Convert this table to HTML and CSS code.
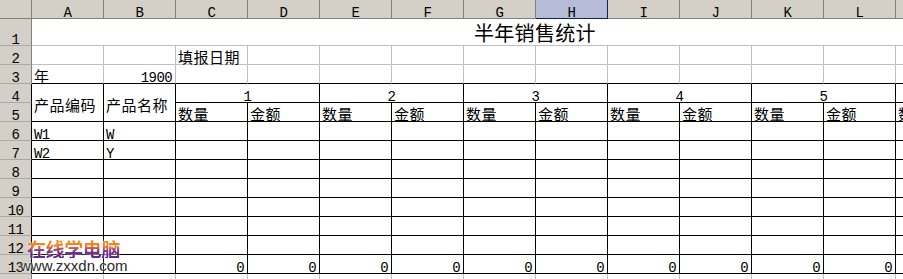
FILE: index.html
```html
<!DOCTYPE html>
<html lang="zh">
<head>
<meta charset="utf-8">
<title>半年销售统计</title>
<link rel="stylesheet" href="styles.css">
</head>
<body>
<div class="sheet">
  <!-- column headers -->
  <div class="c h"></div>
  <div class="c h">A</div><div class="c h">B</div><div class="c h">C</div><div class="c h">D</div>
  <div class="c h">E</div><div class="c h">F</div><div class="c h">G</div><div class="c h sel">H</div>
  <div class="c h">I</div><div class="c h">J</div><div class="c h">K</div><div class="c h">L</div>
  <div class="c h"></div>

  <!-- row 1 -->
  <div class="c r">1</div>
  <div class="c z title">半年销售统计</div>

  <!-- row 2 -->
  <div class="c r">2</div>
  <div class="c"></div><div class="c"></div><div class="c z">填报日期</div><div class="c"></div>
  <div class="c"></div><div class="c"></div><div class="c"></div><div class="c"></div>
  <div class="c"></div><div class="c"></div><div class="c"></div><div class="c"></div><div class="c"></div>

  <!-- row 3 -->
  <div class="c r">3</div>
  <div class="c t z">年</div><div class="c t rt">1900</div><div class="c t"></div><div class="c t"></div>
  <div class="c t"></div><div class="c t"></div><div class="c t"></div><div class="c t"></div>
  <div class="c t"></div><div class="c t"></div><div class="c t"></div><div class="c t"></div><div class="c t"></div>

  <!-- row 4 -->
  <div class="c r rk">4</div>
  <div class="c k z mid rs2">产品编码</div>
  <div class="c k z mid rs2">产品名称</div>
  <div class="c k ctr cs2">1</div>
  <div class="c k ctr cs2">2</div>
  <div class="c k ctr cs2">3</div>
  <div class="c k ctr cs2">4</div>
  <div class="c k ctr cs2">5</div>
  <div class="c k"></div>

  <!-- row 5 -->
  <div class="c r rk">5</div>
  <div class="c k z">数量</div><div class="c k z">金额</div>
  <div class="c k z">数量</div><div class="c k z">金额</div>
  <div class="c k z">数量</div><div class="c k z">金额</div>
  <div class="c k z">数量</div><div class="c k z">金额</div>
  <div class="c k z">数量</div><div class="c k z">金额</div>
  <div class="c k z">数量</div>

  <!-- row 6 -->
  <div class="c r rk">6</div>
  <div class="c k">W1</div><div class="c k">W</div><div class="c k"></div><div class="c k"></div>
  <div class="c k"></div><div class="c k"></div><div class="c k"></div><div class="c k"></div>
  <div class="c k"></div><div class="c k"></div><div class="c k"></div><div class="c k"></div><div class="c k"></div>

  <!-- row 7 -->
  <div class="c r rk">7</div>
  <div class="c k">W2</div><div class="c k">Y</div><div class="c k"></div><div class="c k"></div>
  <div class="c k"></div><div class="c k"></div><div class="c k"></div><div class="c k"></div>
  <div class="c k"></div><div class="c k"></div><div class="c k"></div><div class="c k"></div><div class="c k"></div>

  <!-- row 8 -->
  <div class="c r rk">8</div>
  <div class="c k"></div><div class="c k"></div><div class="c k"></div><div class="c k"></div>
  <div class="c k"></div><div class="c k"></div><div class="c k"></div><div class="c k"></div>
  <div class="c k"></div><div class="c k"></div><div class="c k"></div><div class="c k"></div><div class="c k"></div>

  <!-- row 9 -->
  <div class="c r rk">9</div>
  <div class="c k"></div><div class="c k"></div><div class="c k"></div><div class="c k"></div>
  <div class="c k"></div><div class="c k"></div><div class="c k"></div><div class="c k"></div>
  <div class="c k"></div><div class="c k"></div><div class="c k"></div><div class="c k"></div><div class="c k"></div>

  <!-- row 10 -->
  <div class="c r rk">10</div>
  <div class="c k"></div><div class="c k"></div><div class="c k"></div><div class="c k"></div>
  <div class="c k"></div><div class="c k"></div><div class="c k"></div><div class="c k"></div>
  <div class="c k"></div><div class="c k"></div><div class="c k"></div><div class="c k"></div><div class="c k"></div>

  <!-- row 11 -->
  <div class="c r rk">11</div>
  <div class="c k"></div><div class="c k"></div><div class="c k"></div><div class="c k"></div>
  <div class="c k"></div><div class="c k"></div><div class="c k"></div><div class="c k"></div>
  <div class="c k"></div><div class="c k"></div><div class="c k"></div><div class="c k"></div><div class="c k"></div>

  <!-- row 12 -->
  <div class="c r rk">12</div>
  <div class="c k"></div><div class="c k"></div><div class="c k"></div><div class="c k"></div>
  <div class="c k"></div><div class="c k"></div><div class="c k"></div><div class="c k"></div>
  <div class="c k"></div><div class="c k"></div><div class="c k"></div><div class="c k"></div><div class="c k"></div>

  <!-- row 13 -->
  <div class="c r rk">13</div>
  <div class="c k"></div><div class="c k"></div>
  <div class="c k rt">0</div><div class="c k rt">0</div><div class="c k rt">0</div><div class="c k rt">0</div>
  <div class="c k rt">0</div><div class="c k rt">0</div><div class="c k rt">0</div><div class="c k rt">0</div>
  <div class="c k rt">0</div><div class="c k rt">0</div><div class="c k"></div>

  <!-- row 14 -->
  <div class="c r"></div>
  <div class="c"></div><div class="c"></div><div class="c"></div><div class="c"></div>
  <div class="c"></div><div class="c"></div><div class="c"></div><div class="c"></div>
  <div class="c"></div><div class="c"></div><div class="c"></div><div class="c"></div><div class="c"></div>

  <!-- watermark overlay -->
  <div class="wm">
    <div class="wm-cn">在线学电脑</div>
    <div class="wm-url">www.zxxdn.com</div>
  </div>
</div>
</body>
</html>
```

FILE: styles.css
```css
html, body {
  margin: 0;
  padding: 0;
  height: 279px;
  overflow: hidden;
  background: #ffffff;
}

.sheet {
  position: relative;
  display: grid;
  grid-template-columns: 32px repeat(12, 72px) 100px;
  grid-template-rows: 19px 27px repeat(13, 19px);
  font-family: "Liberation Mono", "Noto Sans CJK SC", monospace;
  font-size: 14px;
  color: #000;
}

.c {
  box-sizing: border-box;
  border-right: 1px solid #c0c0c0;
  border-bottom: 1px solid #c0c0c0;
  display: flex;
  align-items: flex-end;
  padding: 0 2px;
  white-space: nowrap;
  line-height: 9px;
  letter-spacing: -0.6px;
}

/* header row */
.h {
  background: #d4d0c8;
  border-right-color: #808080;
  border-bottom-color: #808080;
  justify-content: center;
  padding: 0;
}
.sel {
  background: #b6bcd6;
  border-right-color: #0a246a;
  border-bottom-color: #0a246a;
}

/* row headers */
.r {
  background: #d4d0c8;
  border-right-color: #808080;
  border-bottom-color: #a8a8a8;
  justify-content: center;
  padding: 0;
}
.rk {
  border-right-color: #000;
}

/* chinese text */
.z {
  font-family: "Noto Sans CJK SC", sans-serif;
  font-size: 15px;
  line-height: 15px;
  letter-spacing: 0.5px;
}

.title {
  grid-column: 2 / -1;
  border-right: none;
  font-size: 20px;
  line-height: 20px;
  letter-spacing: 0.3px;
  padding-left: 442px;
  padding-bottom: 2px;
}

/* black bordered table area */
.k {
  border-right-color: #000;
  border-bottom-color: #000;
}
.t {
  border-bottom-color: #000;
}

.rt {
  justify-content: flex-end;
  padding-right: 3px;
}
.ctr {
  justify-content: center;
}
.mid {
  align-items: center;
  padding-top: 4px;
}
.cs2 {
  grid-column: span 2;
}
.rs2 {
  grid-row: span 2;
}

/* watermark */
.wm {
  position: absolute;
  left: 20px;
  top: 239px;
  width: 120px;
}
.wm-cn {
  margin-left: 7px;
  font-family: "Noto Sans CJK SC", sans-serif;
  font-weight: 700;
  font-size: 19px;
  line-height: 19px;
  letter-spacing: -0.4px;
  background: linear-gradient(180deg, #f7901e 0%, #ee8222 38%, #a04a72 55%, #6a2c88 75%, #5a2a8a 100%);
  -webkit-background-clip: text;
  background-clip: text;
  color: transparent;
  filter: drop-shadow(0 0 1px #ffffff);
}
.wm-url {
  font-family: "Liberation Sans", Arial, sans-serif;
  font-size: 15px;
  line-height: 15px;
  color: #2a2a2a;
  text-shadow: 0 0 2px #ffffff, 0 0 1px #ffffff;
}
```
